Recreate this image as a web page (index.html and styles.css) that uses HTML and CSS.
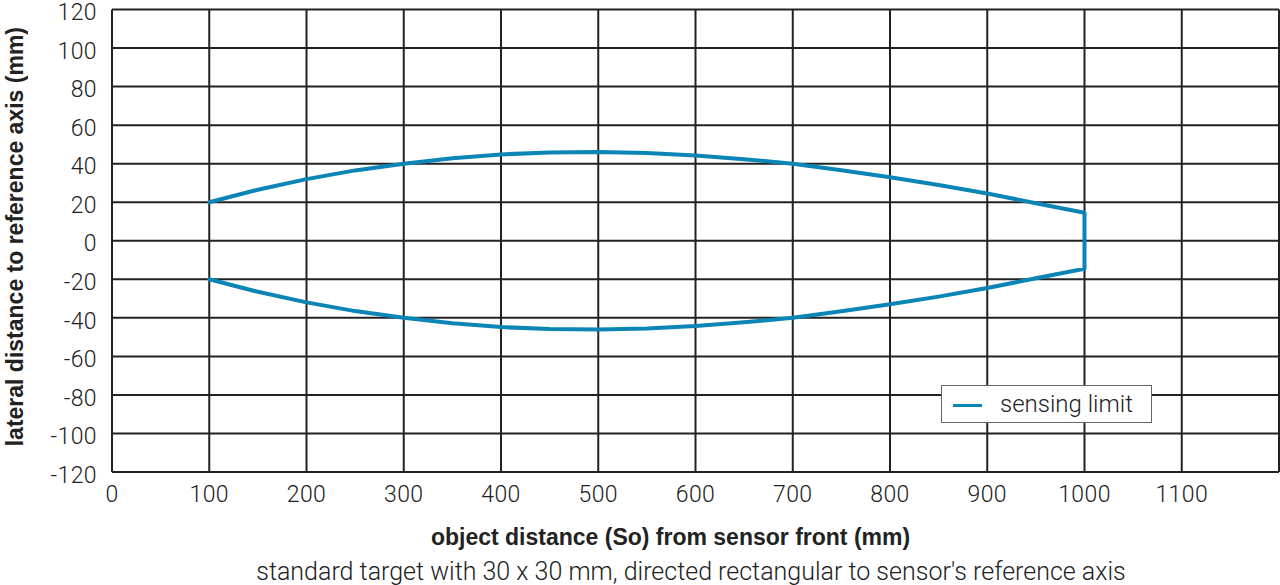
FILE: index.html
```html
<!DOCTYPE html>
<html>
<head>
<meta charset="utf-8">
<link rel="stylesheet" href="styles.css">
</head>
<body>
<div class="chart">
  <div class="ytitle"><span>lateral distance to reference axis (mm)</span></div>
  <div class="yticks">
    <span>120</span><span>100</span><span>80</span><span>60</span><span>40</span><span>20</span><span>0</span>
    <span>-20</span><span>-40</span><span>-60</span><span>-80</span><span>-100</span><span>-120</span>
  </div>
  <div class="plot">
    <svg class="grid" width="1169" height="483" viewBox="111 0 1169 483">
      <g stroke="#222" stroke-width="2" fill="none">
        <line x1="112" y1="9.5" x2="112" y2="472"/>
        <line x1="209.25" y1="9.5" x2="209.25" y2="472"/>
        <line x1="306.5" y1="9.5" x2="306.5" y2="472"/>
        <line x1="403.75" y1="9.5" x2="403.75" y2="472"/>
        <line x1="501" y1="9.5" x2="501" y2="472"/>
        <line x1="598.25" y1="9.5" x2="598.25" y2="472"/>
        <line x1="695.5" y1="9.5" x2="695.5" y2="472"/>
        <line x1="792.75" y1="9.5" x2="792.75" y2="472"/>
        <line x1="890" y1="9.5" x2="890" y2="472"/>
        <line x1="987.25" y1="9.5" x2="987.25" y2="472"/>
        <line x1="1084.5" y1="9.5" x2="1084.5" y2="472"/>
        <line x1="1181.75" y1="9.5" x2="1181.75" y2="472"/>
        <line x1="1279" y1="9.5" x2="1279" y2="472"/>
        <line x1="112" y1="9.5" x2="1279" y2="9.5"/>
        <line x1="112" y1="48.04" x2="1279" y2="48.04"/>
        <line x1="112" y1="86.58" x2="1279" y2="86.58"/>
        <line x1="112" y1="125.13" x2="1279" y2="125.13"/>
        <line x1="112" y1="163.67" x2="1279" y2="163.67"/>
        <line x1="112" y1="202.21" x2="1279" y2="202.21"/>
        <line x1="112" y1="240.75" x2="1279" y2="240.75"/>
        <line x1="112" y1="279.29" x2="1279" y2="279.29"/>
        <line x1="112" y1="317.83" x2="1279" y2="317.83"/>
        <line x1="112" y1="356.38" x2="1279" y2="356.38"/>
        <line x1="112" y1="394.92" x2="1279" y2="394.92"/>
        <line x1="112" y1="433.46" x2="1279" y2="433.46"/>
        <line x1="112" y1="472" x2="1279" y2="472"/>
      </g>
      <polyline class="curve" fill="none" stroke-width="4" stroke-linejoin="round" stroke-linecap="round"
        points="209.25,202.2 257.9,189.7 306.5,179.1 355.1,170.4 403.75,163.7 452.4,158.2 501,154.4 549.6,152.5 598.25,152.1 646.9,153.1 695.5,155.6 744.1,159.2 792.75,163.7 841.4,170.2 890,177.2 938.6,184.9 987.25,193.5 1035.9,203.2 1084.5,212.8 1084.5,268.7 1035.9,278.3 987.25,288.0 938.6,296.6 890,304.3 841.4,311.3 792.75,317.8 744.1,322.3 695.5,325.9 646.9,328.4 598.25,329.4 549.6,329.0 501,327.1 452.4,323.3 403.75,317.8 355.1,311.1 306.5,302.4 257.9,291.8 209.25,279.3"/>
    </svg>
    <div class="legend">
      <span class="legend-line"></span>
      <span class="legend-text">sensing limit</span>
    </div>
  </div>
  <div class="xticks">
    <span>0</span><span>100</span><span>200</span><span>300</span><span>400</span><span>500</span>
    <span>600</span><span>700</span><span>800</span><span>900</span><span>1000</span><span>1100</span>
  </div>
  <div class="xtitle">object distance (So) from sensor front (mm)</div>
  <div class="subtitle">standard target with 30 x 30 mm, directed rectangular to sensor's reference axis</div>
</div>
</body>
</html>
```
FILE: styles.css
```css
html, body {
  margin: 0;
  padding: 0;
  background: #ffffff;
}
body {
  width: 1280px;
  height: 585px;
  overflow: hidden;
  color: #222222;
  font-family: Roboto, "Liberation Sans", sans-serif;
  font-weight: 300;
}
.chart {
  display: grid;
  grid-template-columns: 30px 66px 15px 1169px;
  grid-template-rows: 483px 24px 51px 27px;
}
.ytitle {
  grid-column: 1;
  grid-row: 1;
  height: 474px;
  display: flex;
  align-items: center;
  justify-content: center;
}
.ytitle span {
  writing-mode: vertical-rl;
  transform: rotate(180deg);
  font-family: "Liberation Sans", Arial, sans-serif;
  font-weight: 700;
  font-size: 23px;
  line-height: 26px;
  white-space: nowrap;
}
.yticks {
  grid-column: 2;
  grid-row: 1 / 3;
  display: flex;
  flex-direction: column;
  justify-content: space-between;
  align-items: flex-end;
  padding-top: 1px;
  padding-bottom: 19px;
  font-size: 23px;
  line-height: 24px;
  letter-spacing: 0.4px;
}
.yticks span {
  height: 24px;
  display: block;
  margin-right: -1px;
  white-space: nowrap;
}
.plot {
  grid-column: 4;
  grid-row: 1;
  position: relative;
}
.grid {
  display: block;
}
.curve {
  stroke: #0a85b6;
}
.legend {
  position: absolute;
  left: 830px;
  top: 385px;
  width: 209px;
  height: 36px;
  border: 1.5px solid #666;
  background: #fff;
  display: flex;
  align-items: center;
  box-sizing: content-box;
}
.legend-line {
  width: 29px;
  height: 3px;
  background: #0a85b6;
  margin-left: 11px;
  margin-top: 3px;
}
.legend-text {
  margin-left: 18px;
  font-size: 24px;
  line-height: 26px;
  white-space: nowrap;
}
.xticks {
  grid-column: 2 / 5;
  grid-row: 2;
  display: flex;
  padding-left: 33.4px;
  font-size: 23px;
  line-height: 24px;
  letter-spacing: 0.4px;
}
.xticks span {
  width: 97.25px;
  flex: none;
  text-align: center;
}
.xtitle {
  grid-column: 1 / 5;
  grid-row: 3;
  padding-left: 61px;
  text-align: center;
  font-family: "Liberation Sans", Arial, sans-serif;
  font-weight: 700;
  font-size: 23px;
  line-height: 26px;
  padding-top: 17px;
}
.subtitle {
  grid-column: 1 / 5;
  grid-row: 4;
  padding-left: 102px;
  text-align: center;
  font-size: 25px;
  line-height: 27px;
  white-space: nowrap;
}
```
